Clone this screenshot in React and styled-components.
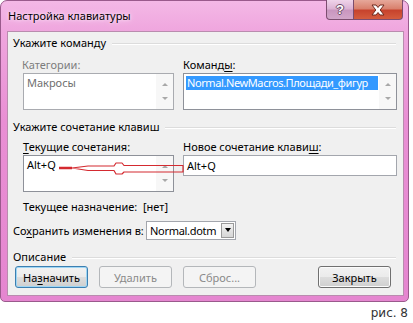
import React from 'react';
import styled, { createGlobalStyle, css } from 'styled-components';

const GlobalStyle = createGlobalStyle`
  html, body {
    margin: 0;
    padding: 0;
    background: #fff;
  }
  body {
    font-family: "Noto Sans", "Liberation Sans", sans-serif;
    font-size: 11px;
    color: #000;
  }
`;

const Page = styled.div`
  position: relative;
  width: 413px;
  height: 323px;
  overflow: hidden;
  background: #fff;
  display: flex;
  flex-direction: column;
  align-items: flex-start;
`;

/* Aero window frame */
const Window = styled.div`
  box-sizing: border-box;
  width: 409px;
  height: 302px;
  display: flex;
  flex-direction: column;
  padding: 0 4px 5px 6px;
  border: 1px solid #9a5a8c;
  border-radius: 7px 7px 5px 5px;
  background: linear-gradient(180deg, #f4b8e6 0%, #efa6de 10%, #e98fd4 40%, #e586d0 100%);
`;

const TitleBar = styled.div`
  height: 30px;
  display: flex;
  align-items: flex-start;
  justify-content: space-between;
`;

const Title = styled.div`
  padding: 7px 0 0 1px;
  font-size: 11px;
  line-height: 16px;
  text-shadow: 0 0 6px #fde6f7, 0 0 3px #fde6f7;
`;

const CaptionButtons = styled.div`
  display: flex;
  margin: -1px 1px 0 0;
`;

const CaptionButton = styled.div`
  box-sizing: border-box;
  height: 20px;
  display: flex;
  align-items: center;
  justify-content: center;
  border: 1px solid #7c4d6f;
  border-top: none;
  ${(p) =>
    p.$kind === 'close'
      ? css`
          width: 49px;
          border-radius: 0 0 4px 0;
          border-left: none;
          background: linear-gradient(180deg, #e6a89a 0%, #d9816e 45%, #c7432d 55%, #d45c3e 100%);
        `
      : css`
          width: 28px;
          border-radius: 0 0 0 4px;
          background: linear-gradient(180deg, #efd4ea 0%, #dcb3d4 45%, #c996bf 55%, #d2a6c9 100%);
        `}
`;

const HelpGlyph = styled.span`
  font-family: "Liberation Sans", sans-serif;
  font-weight: bold;
  font-size: 13px;
  line-height: 13px;
  color: #fff;
  text-shadow: -1px 0 #6c4a64, 1px 0 #6c4a64, 0 -1px #6c4a64, 0 1px #6c4a64;
`;

const Client = styled.div`
  flex: 1;
  display: flex;
  flex-direction: column;
  background: #f0f0f0;
  border: 1px solid #b98cae;
  white-space: nowrap;
`;

const GroupHeader = styled.div`
  display: flex;
  align-items: center;
  gap: 6px;
  height: 16px;
  line-height: 16px;
  margin: ${(p) => p.$top}px 7px 0 5px;

  &::after {
    content: '';
    flex: 1;
    height: 1px;
    background: #dcdcdc;
    box-shadow: 0 1px 0 #fff;
  }
`;

const Pair = styled.div`
  display: grid;
  grid-template-columns: 151px 214px;
  column-gap: 9px;
  align-items: start;
  margin: ${(p) => p.$top}px 0 0 15px;
`;

const Field = styled.div`
  display: flex;
  flex-direction: column;
`;

const Label = styled.div`
  height: 16px;
  line-height: 16px;
  color: ${(p) => (p.$disabled ? '#7d7d7d' : '#000')};
  margin-left: ${(p) => (p.$disabled ? -1 : 0)}px;
`;

const ListBox = styled.div`
  box-sizing: border-box;
  height: 37px;
  display: flex;
  background: #fff;
  border: 1px solid ${(p) => (p.$disabled ? '#a9abb0' : '#8e9199')};
`;

const Items = styled.div`
  flex: 1;
  min-width: 0;
  padding: 2px 1px 0 2px;
`;

const Item = styled.div`
  height: 14px;
  line-height: 14px;
  padding-left: 1px;
  overflow: hidden;
  color: ${(p) => (p.$disabled ? '#6f6f6f' : p.$selected ? '#fff' : '#000')};
  background: ${(p) => (p.$selected ? '#3399ff' : 'transparent')};
  letter-spacing: ${(p) => (p.$selected ? '-0.4px' : 'normal')};
`;

const ScrollCol = styled.div`
  width: 17px;
  display: flex;
  flex-direction: column;
  align-items: center;
  justify-content: space-between;
  padding: 9px 0 9px;
  box-sizing: border-box;
  background: #f7f7f7;
`;

const Arrow = styled.span`
  width: 0;
  height: 0;
  border-left: 3px solid transparent;
  border-right: 3px solid transparent;
  ${(p) =>
    p.$down
      ? css`border-top: 3px solid #a8a8a8;`
      : css`border-bottom: 3px solid #a8a8a8;`}
`;

const TextBox = styled.div`
  box-sizing: border-box;
  height: 21px;
  line-height: 19px;
  padding-left: 3px;
  background: #fff;
  border: 1px solid #a3a6ad;
`;

const InfoRow = styled.div`
  display: grid;
  grid-template-columns: 120px auto;
  height: 16px;
  line-height: 16px;
  margin: 7px 0 0 15px;
`;

const SaveRow = styled.div`
  display: grid;
  grid-template-columns: 133px 90px;
  align-items: center;
  height: 20px;
  margin: 5px 0 0 5px;
`;

const Combo = styled.div`
  box-sizing: border-box;
  height: 19px;
  display: flex;
  align-items: center;
  justify-content: space-between;
  padding: 0 1px 0 3px;
  letter-spacing: -0.3px;
  background: #fff;
  border: 1px solid #a3a6ad;
`;

const DropButton = styled.div`
  box-sizing: border-box;
  width: 13px;
  height: 15px;
  display: flex;
  align-items: center;
  justify-content: center;
  border: 1px solid #9a9a9a;
  background: linear-gradient(180deg, #f3f3f3 0%, #e3e3e3 50%, #d6d6d6 100%);
`;

const DropArrow = styled.span`
  width: 0;
  height: 0;
  border-left: 3px solid transparent;
  border-right: 3px solid transparent;
  border-top: 4px solid #000;
`;

const ButtonRow = styled.div`
  display: flex;
  gap: 11px;
  margin: 1px 12px 0 7px;
`;

const Button = styled.div`
  box-sizing: border-box;
  width: 73px;
  height: 22px;
  display: flex;
  align-items: center;
  justify-content: center;
  border-radius: 3px;
  border: 1px solid #707070;
  background: linear-gradient(180deg, #f2f2f2 0%, #ebebeb 50%, #dddddd 51%, #cfcfcf 100%);
  box-shadow: inset 0 0 0 1px #fbfbfb;
  ${(p) =>
    p.$default &&
    css`
      border-color: #3c7fb1;
      box-shadow: inset 0 0 0 1px #9fd6f4;
    `}
  ${(p) =>
    p.$disabled &&
    css`
      color: #8a8a8a;
      border-color: #b4b7ba;
      background: #f4f4f4;
      box-shadow: none;
    `}
  ${(p) => p.$push && css`margin-left: auto;`}
`;

const FigureCaption = styled.div`
  align-self: flex-end;
  margin: 4px 5px 0 0;
  font-family: "DejaVu Sans", sans-serif;
  font-size: 12px;
  line-height: 14px;
  color: #333;
`;

const Annotation = styled.svg`
  position: absolute;
  left: 0;
  top: 0;
  pointer-events: none;
`;

const Key = styled.u`
  text-decoration-thickness: 1px;
  text-underline-offset: 2px;
`;

function ScrollArrows() {
  return (
    <ScrollCol>
      <Arrow />
      <Arrow $down />
    </ScrollCol>
  );
}

export default function App() {
  return (
    <Page>
      <GlobalStyle />
      <Window>
        <TitleBar>
          <Title>Настройка клавиатуры</Title>
          <CaptionButtons>
            <CaptionButton $kind="help">
              <HelpGlyph>?</HelpGlyph>
            </CaptionButton>
            <CaptionButton $kind="close">
              <svg width="14" height="12" viewBox="0 0 14 12">
                <path
                  d="M1 1 H5 L7 3.5 L9 1 H13 L9.2 6 L13 11 H9 L7 8.5 L5 11 H1 L4.8 6 Z"
                  fill="#fff"
                  stroke="#6e2a1e"
                  strokeWidth="1"
                  strokeLinejoin="round"
                />
              </svg>
            </CaptionButton>
          </CaptionButtons>
        </TitleBar>

        <Client>
          <GroupHeader $top={3}>Укажите команду</GroupHeader>
          <Pair $top={6}>
            <Field>
              <Label $disabled>Категории:</Label>
              <ListBox $disabled>
                <Items>
                  <Item $disabled>Макросы</Item>
                </Items>
                <ScrollArrows />
              </ListBox>
            </Field>
            <Field>
              <Label>
                Команд<Key>ы</Key>:
              </Label>
              <ListBox>
                <Items>
                  <Item $selected>Normal.NewMacros.Площади_фигур</Item>
                </Items>
                <ScrollArrows />
              </ListBox>
            </Field>
          </Pair>

          <GroupHeader $top={9}>Укажите сочетание клавиш</GroupHeader>
          <Pair $top={4}>
            <Field>
              <Label>
                <Key>Т</Key>екущие сочетания:
              </Label>
              <ListBox>
                <Items>
                  <Item>Alt+Q</Item>
                </Items>
                <ScrollArrows />
              </ListBox>
            </Field>
            <Field>
              <Label>
                Новое сочетание клави<Key>ш</Key>:
              </Label>
              <TextBox>Alt+Q</TextBox>
            </Field>
          </Pair>

          <InfoRow>
            <span>Текущее назначение:</span>
            <span>[нет]</span>
          </InfoRow>

          <SaveRow>
            <span>
              Со<Key>х</Key>ранить изменения в:
            </span>
            <Combo>
              <span>Normal.dotm</span>
              <DropButton>
                <DropArrow />
              </DropButton>
            </Combo>
          </SaveRow>

          <GroupHeader $top={9}>Описание</GroupHeader>
          <ButtonRow>
            <Button $default>
              <span>
                На<Key>з</Key>начить
              </span>
            </Button>
            <Button $disabled>Удалить</Button>
            <Button $disabled>Сброс...</Button>
            <Button $push>Закрыть</Button>
          </ButtonRow>
        </Client>
      </Window>
      <FigureCaption>рис. 8</FigureCaption>

      <Annotation width="413" height="323" viewBox="0 0 413 323">
        <path d="M59 168 L72 168" stroke="#d42a30" strokeWidth="2.5" />
        <path
          d="M72 168 L88 166 L114 166 L116 163 L122 163 L124 165.5 L183 165.5 L183 172 L124 172 L122 174 L116 174 L114 170.5 L88 170.5 Z"
          fill="none"
          stroke="#d42a30"
          strokeWidth="1.2"
          strokeLinejoin="round"
        />
      </Annotation>
    </Page>
  );
}
